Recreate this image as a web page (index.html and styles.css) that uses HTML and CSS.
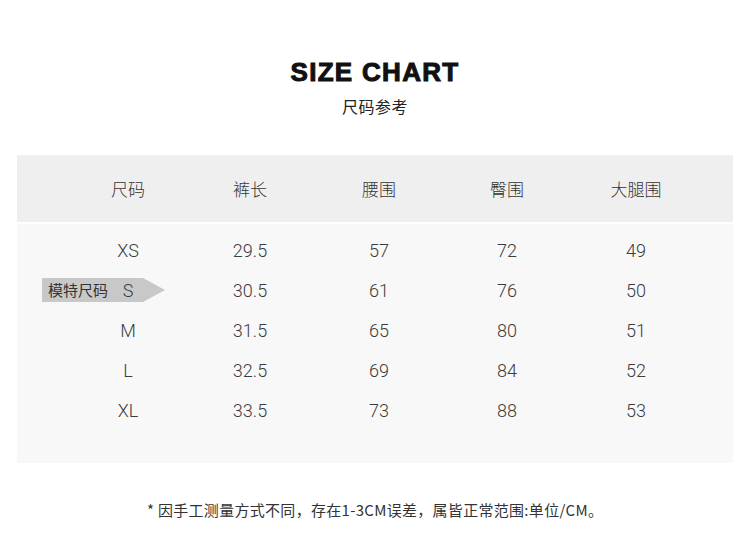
FILE: index.html
```html
<!DOCTYPE html>
<html lang="zh">
<head>
<meta charset="utf-8">
<title>Size Chart</title>
<link rel="stylesheet" href="styles.css">
</head>
<body>
<div class="page">
  <header class="heading">
    <h1 class="title">SIZE CHART</h1>
    <p class="subtitle">尺码参考</p>
  </header>
  <section class="chart">
    <div class="row head">
      <div>尺码</div><div>裤长</div><div>腰围</div><div>臀围</div><div>大腿围</div>
    </div>
    <div class="body">
      <div class="row"><div>XS</div><div>29.5</div><div>57</div><div>72</div><div>49</div></div>
      <div class="row model"><span class="badge">模特尺码</span><div class="size">S</div><div>30.5</div><div>61</div><div>76</div><div>50</div></div>
      <div class="row"><div>M</div><div>31.5</div><div>65</div><div>80</div><div>51</div></div>
      <div class="row"><div>L</div><div>32.5</div><div>69</div><div>84</div><div>52</div></div>
      <div class="row"><div>XL</div><div>33.5</div><div>73</div><div>88</div><div>53</div></div>
    </div>
  </section>
  <p class="note">* 因手工测量方式不同，存在1-3CM误差，属皆正常范围:单位/CM。</p>
</div>
</body>
</html>
```
FILE: styles.css
```css
html, body {
  margin: 0;
  padding: 0;
  background: #ffffff;
}
.page {
  width: 750px;
  height: 543px;
  font-family: "Roboto", "Noto Sans CJK SC", sans-serif;
  color: #3a3a3a;
  padding-top: 58px;
  box-sizing: border-box;
}
.heading {
  text-align: center;
}
.title {
  margin: 0;
  font-family: "Liberation Sans", sans-serif;
  font-size: 26px;
  line-height: 28px;
  font-weight: 700;
  letter-spacing: 1.3px;
  color: #111;
  -webkit-text-stroke: 1px #111;
}
.subtitle {
  margin: 8px 0 0;
  font-family: "Noto Sans CJK SC", sans-serif;
  font-size: 16px;
  line-height: 24px;
  color: #222;
  letter-spacing: 0.5px;
}
.chart {
  margin: 37px 17px 0;
}
.row {
  display: grid;
  grid-template-columns: 122px 122px 136px 120px 138px;
  padding-left: 50px;
  align-items: center;
  text-align: center;
  height: 40px;
  font-size: 18px;
  font-weight: 300;
  color: #3c3c3c;
  position: relative;
}
.head {
  background: #efefef;
  height: 67px;
  font-family: "Noto Sans CJK SC", sans-serif;
  font-size: 17px;
  font-weight: 300;
  color: #333;
  margin-bottom: 2px;
}
.body {
  background: #f8f8f8;
  padding: 6px 0 33px;
}
.model .size {
  position: relative;
  z-index: 1;
}
.badge {
  position: absolute;
  left: 25px;
  top: 8px;
  width: 123px;
  height: 24px;
  background: #c8c8c8;
  clip-path: polygon(0 0, 101px 0, 123px 50%, 101px 100%, 0 100%);
  font-family: "Noto Sans CJK SC", sans-serif;
  font-size: 15px;
  font-weight: 400;
  line-height: 24px;
  text-align: left;
  padding-left: 6px;
  box-sizing: border-box;
  color: #333;
}
.note {
  margin: 37px 0 0;
  padding-left: 147px;
  font-family: "Noto Sans CJK SC", sans-serif;
  font-size: 15px;
  letter-spacing: 0.3px;
  line-height: 20px;
  color: #333;
}
```
